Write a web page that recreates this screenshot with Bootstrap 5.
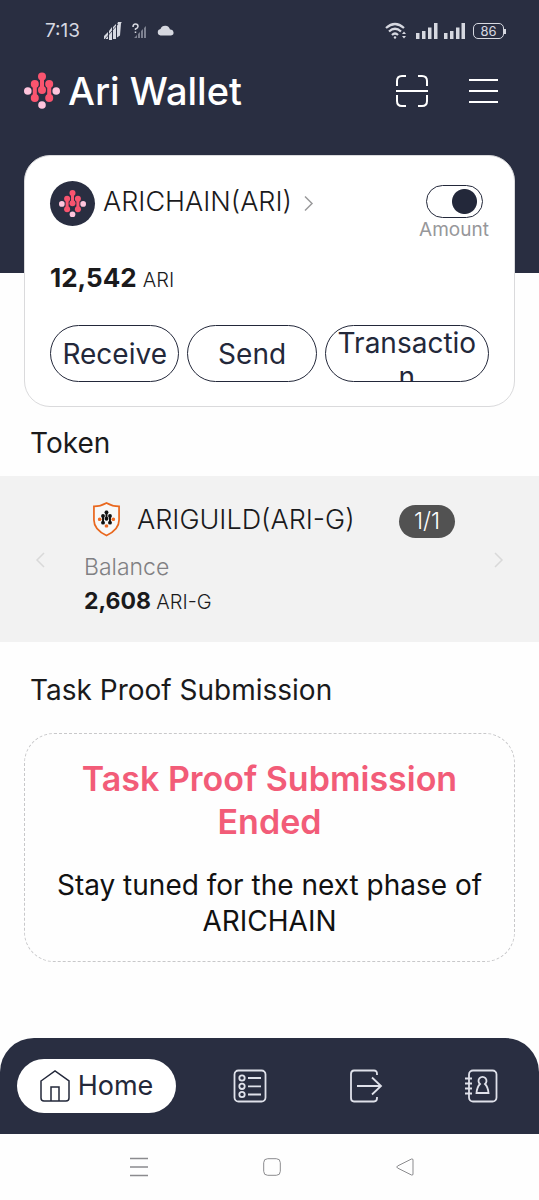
<!DOCTYPE html>
<html lang="en">
<head>
<meta charset="utf-8">
<meta name="viewport" content="width=device-width, initial-scale=1">
<title>Ari Wallet</title>
<link href="https://cdn.jsdelivr.net/npm/bootstrap@5.3.0/dist/css/bootstrap.min.css" rel="stylesheet">
<style>
  :root { --navy: #292e41; --ink: #1a1a1c; --rose: #f25c78; --pink: #ffc4dc; }
  body { font-family: Inter, "Liberation Sans", sans-serif; color: var(--ink); background: #fefefe; }
  svg { display: block; flex: none; }
  button { font-family: inherit; }
  .plain-btn { background: none; border: 0; padding: 0; color: inherit; }

  .hero { background: var(--navy); color: #fff; padding-bottom: 154px; }
  .status { height: 62px; padding: 0 33px 0 45px; color: #d6d8e0; font-size: 19px; line-height: 24px; }
  .charge { font-size: 13px; line-height: 16px; width: 31px; height: 16px; border: 1px solid #d6d8e0; border-radius: 5px; }
  .charge span { line-height: 14px; }
  .charge-tip { width: 2px; height: 5px; background: #d6d8e0; }
  .appbar { padding: 0 40px 0 24px; height: 57px; }
  .brand-name { font-size: 38px; line-height: 42px; font-weight: 500; }
  .app-actions { gap: 40px; }

  .wallet { margin: -118px 24px 0; padding: 25px 25px 24px; border: 1px solid #dadadc; border-radius: 26px; background: #fff; }
  .coin { width: 45px; height: 45px; background: var(--navy); }
  .coin-name { font-size: 27px; line-height: 36px; font-weight: 300; }
  .amount-switch { width: 70px; }
  .amount-switch .form-check-input { width: 57px; height: 33px; margin: 0; float: none; border: 1px solid #23283a; border-radius: 17px; box-shadow: none; background-color: #fff;
    background-image: radial-gradient(circle, #23283a 12px, transparent 13px); background-size: 31px 31px; background-repeat: no-repeat; background-position: left center; }
  .amount-switch .form-check-input:checked { background-position: right 2px center; }
  .amount-switch label { font-size: 19px; line-height: 24px; color: #97979a; font-weight: 400; }
  .sum { font-size: 26px; line-height: 32px; font-weight: 700; }
  .unit { font-size: 20px; font-weight: 300; }
  .acts { margin-top: 29px; }
  .act { flex: 1 1 130px; height: 57px; padding: 0 8px; font-size: 28px; line-height: 34px; color: #23283a; background: #fff; border: 1px solid #23283a; border-radius: 29px; overflow: hidden; word-break: break-all; }
  .act-wide { flex-basis: 165px; }

  .sect { font-size: 28px; line-height: 36px; font-weight: 400; margin: 0; padding: 18px 30px 15px; }
  .sect-task { padding: 30px 30px 25px; }
  .token-strip { background: #f2f2f2; padding: 25px 35px 23px; }
  .token-body { padding: 0 39px; }
  .page-pill { background: #525252; color: #fff; font-size: 23px; line-height: 33px; font-weight: 300; width: 56px; border-radius: 17px; }
  .bal-label { font-size: 23px; line-height: 33px; color: #808083; font-weight: 300; margin-top: 13px; }
  .bal { font-size: 23px; line-height: 34px; font-weight: 700; }

  .notice { margin: 0 24px; padding: 23px 20px 22px; border: 1px dashed #c8c8ca; border-radius: 30px; }
  .notice h3 { font-size: 34px; line-height: 43px; font-weight: 600; color: var(--rose); margin: 0 0 24px; }
  .notice p { font-size: 28px; line-height: 36px; font-weight: 400; color: #111; margin: 0; }

  .tabs { background: var(--navy); color: #dfe1ea; border-radius: 34px 34px 0 0; padding: 21px 0 21px 17px; gap: 16px; }
  .tab-home { width: 159px; height: 54px; border-radius: 27px; background: #fff; color: #23283a; font-size: 27px; line-height: 34px; }
  .tabs a { text-decoration: none; }
  .tab-icon { color: inherit; }
  .sysnav { height: 66px; padding: 0 67px 0 72px; color: #8b8b8e; }
</style>
</head>
<body>
<svg width="0" height="0" class="position-absolute" aria-hidden="true">
  <symbol id="ari" viewBox="0 0 36 36">
    <g fill="var(--dot, #ffc4dc)"><circle cx="3.800" cy="18.500" r="3.800"/><circle cx="32.200" cy="18.500" r="3.800"/><circle cx="18" cy="32.500" r="3.800"/></g>
    <g fill="var(--link, #f9546f)" stroke="var(--link, #f9546f)"><g stroke="none"><circle cx="18" cy="4" r="4"/><circle cx="18" cy="17.500" r="4"/><circle cx="10.800" cy="11.500" r="4"/><circle cx="10.800" cy="25.500" r="4"/><circle cx="25.200" cy="11.500" r="4"/><circle cx="25.200" cy="25.500" r="4"/></g>
    <path stroke-width="4" d="M18 4v13M10.800 11v14M25.200 11v14"/></g>
  </symbol>
</svg>
<div class="d-flex flex-column min-vh-100">
  <header class="hero">
    <div class="status d-flex align-items-center">
      <span>7:13</span>
      <svg class="ms-4" width="18" height="18" viewBox="0 0 18 18" fill="#d6d8e0"><path d="M0 14l4-4v7H0zM5 9l3-4v13H5zM9 5l3-3v15H9zM13 3l1-3 4-.5-1 2-1 12-3 2z"/><path d="M1 17L14 2" stroke="#292e41" stroke-width=".8"/></svg>
      <svg class="ms-2" width="19" height="18" viewBox="0 0 19 18"><path d="M4 16l3-3v3zM8 12l2-2v6H8zM11 9l2-2v9h-2zM14 6l2-2v12h-2z" fill="#7d8190"/><path d="M3 5Q3 2 5.500 2T8 4.500Q8 6 5.500 7V8M5.500 9.500V11" fill="none" stroke="#d6d8e0" stroke-width="1.500"/></svg>
      <svg class="ms-2" width="17" height="12" viewBox="0 0 17 12" fill="#d6d8e0"><path d="M3.500 10.500a3.300 3.300 0 0 1 0-6.500A5 5 0 0 1 13 4.500a3 3 0 0 1 1 6z"/></svg>
      <div class="d-flex align-items-center ms-auto">
        <svg width="22" height="18" viewBox="0 0 22 18" fill="none" stroke="#d6d8e0" stroke-width="2.200"><path d="M1 6Q10 -2 19 6M4 9.500Q10 4 16 9.500M7 13Q10 10 13 13"/><circle cx="10" cy="15.500" r="1.200" fill="#d6d8e0" stroke="none"/><path d="M17 12l2-2.500 2 2.500zM17 14l2 2.500 2-2.500z" fill="#d6d8e0" stroke="none"/></svg>
        <svg class="ms-2" width="23" height="16" viewBox="0 0 23 16" fill="#d6d8e0"><path d="M1 10h3.500v6H1zM7 8h3.500v8H7zM13 4.500h3.500V16H13zM19 0h3.500v16H19z"/></svg>
        <svg class="ms-1" width="23" height="16" viewBox="0 0 23 16" fill="#d6d8e0"><path d="M2 10h3.500v6H2zM8 8h3.500v8H8zM14 4.500h3.500V16H14zM19.500 0H23v16h-3.500z"/></svg>
        <div class="charge d-flex align-items-center justify-content-center ms-2"><span>86</span></div><div class="charge-tip"></div>
      </div>
    </div>
    <div class="appbar d-flex align-items-center">
      <svg width="36" height="37"><use href="#ari"/></svg>
      <span class="brand-name ms-2">Ari Wallet</span>
      <div class="app-actions d-flex align-items-center ms-auto">
        <button class="plain-btn" type="button" aria-label="Scan"><svg width="34" height="32" viewBox="0 0 34 32" fill="none" stroke="#fff" stroke-width="2"><path d="M2 11V6Q2 1 7 1H11M23 1H27Q32 1 32 6V11M2 20V26Q2 31 7 31H11M23 31H27Q32 31 32 26V20M1 16H33"/></svg></button>
        <button class="plain-btn" type="button" aria-label="Menu"><svg width="30" height="26" viewBox="0 0 30 26" stroke="#fff" stroke-width="2"><path d="M0 2H29M0 13H29M0 24H29"/></svg></button>
      </div>
    </div>
  </header>

  <main>
    <section class="wallet">
      <div class="d-flex align-items-start">
        <button class="plain-btn d-flex align-items-center" type="button">
          <span class="coin rounded-circle d-flex align-items-center justify-content-center"><svg width="27" height="27"><use href="#ari"/></svg></span>
          <span class="coin-name ps-2 pb-1">ARICHAIN(ARI)</span>
          <svg class="ms-2 ps-1" width="14" height="17" viewBox="0 0 10 17" fill="none" stroke="#9a9a9c" stroke-width="1.500"><path d="M1 1.500L8 8.500 1 15.500"/></svg>
        </button>
        <div class="amount-switch form-switch p-0 ms-auto pt-1 d-flex flex-column align-items-center">
          <input class="form-check-input" type="checkbox" role="switch" id="amount" checked>
          <label for="amount">Amount</label>
        </div>
      </div>
      <div class="sum mt-3 pt-1">12,542 <span class="unit">ARI</span></div>
      <div class="acts d-flex gap-2">
        <button class="act" type="button">Receive</button>
        <button class="act" type="button">Send</button>
        <button class="act act-wide" type="button">Transaction</button>
      </div>
    </section>

    <h2 class="sect">Token</h2>
    <section class="token-strip d-flex align-items-center">
      <button class="plain-btn" type="button" aria-label="Previous"><svg width="10" height="16" viewBox="0 0 10 16" fill="none" stroke="#d9d9d9" stroke-width="1.500"><path d="M9 1L2 8 9 15"/></svg></button>
      <div class="token-body flex-grow-1">
        <div class="d-flex align-items-center">
          <svg class="ms-2" width="29" height="37" viewBox="0 0 30 37"><path d="M15 1.500Q21 5 28 5V19Q28 29 15 35 2 29 2 19V5Q9 5 15 1.500Z" fill="#f8f8f8" stroke="#e9681f" stroke-width="1.800"/><use href="#ari" x="6" y="9" width="18" height="18" style="--dot:#ee6b24;--link:#111"/></svg>
          <span class="coin-name ms-3">ARIGUILD(ARI-G)</span>
          <span class="page-pill text-center ms-auto mt-1">1/1</span>
        </div>
        <div class="bal-label">Balance</div>
        <div class="bal">2,608 <span class="unit">ARI-G</span></div>
      </div>
      <button class="plain-btn" type="button" aria-label="Next"><svg width="10" height="16" viewBox="0 0 10 16" fill="none" stroke="#d9d9d9" stroke-width="1.500"><path d="M1 1L8 8 1 15"/></svg></button>
    </section>

    <h2 class="sect sect-task">Task Proof Submission</h2>
    <section class="notice text-center">
      <h3>Task Proof Submission Ended</h3>
      <p>Stay tuned for the next phase of ARICHAIN</p>
    </section>
  </main>

  <footer class="mt-auto pt-4">
    <nav class="tabs d-flex align-items-center">
      <a class="tab-home d-flex align-items-center justify-content-center gap-2" href="#home"><svg width="30" height="32" viewBox="0 0 30 32" fill="none" stroke="#23283a" stroke-width="1.500"><path d="M1 11L15 1 29 11V28Q29 31 26 31H4Q1 31 1 28ZM11 31V17H19V31"/></svg>Home</a>
      <div class="d-flex flex-grow-1">
        <a class="tab-icon flex-fill d-flex justify-content-center" href="#list" aria-label="List"><svg width="34" height="34" viewBox="0 0 34 34" fill="none" stroke="currentColor" stroke-width="1.800"><rect x="1.500" y="1.500" width="31" height="31" rx="4"/><circle cx="9" cy="9" r="2.700"/><circle cx="9" cy="17.300" r="2.700"/><circle cx="9" cy="25.500" r="2.700"/><path d="M15 9H28M15 17.300H28M15 25.500H28"/></svg></a>
        <a class="tab-icon flex-fill d-flex justify-content-center" href="#send" aria-label="Transfer"><svg width="34" height="34" viewBox="0 0 34 34" fill="none" stroke="currentColor" stroke-width="1.800"><path d="M28 6V5Q28 1.500 25 1.500H5Q2 1.500 2 5V29Q2 32.500 5 32.500H25Q28 32.500 28 29V28M8 17H32M23 8.500L32 17 23 25.500"/></svg></a>
        <a class="tab-icon flex-fill d-flex justify-content-center" href="#contacts" aria-label="Contacts"><svg width="34" height="34" viewBox="0 0 34 34" fill="none" stroke="currentColor" stroke-width="1.800"><rect x="5" y="1.500" width="27.500" height="31" rx="4"/><path d="M1 9.500H8M1 14.500H8M1 19.500H8M1 24.500H8M16 15A4 4 0 1 1 21 15Q24 18 24.500 24H12.500Q13 18 16 15Z"/></svg></a>
      </div>
    </nav>
    <nav class="sysnav d-flex align-items-center">
      <button class="plain-btn flex-fill d-flex justify-content-center" type="button" aria-label="Recent apps"><svg width="18" height="20" viewBox="0 0 18 20" stroke="currentColor" stroke-width="1.500"><path d="M0 1.500H18M0 10H18M0 18.500H18"/></svg></button>
      <button class="plain-btn flex-fill d-flex justify-content-center" type="button" aria-label="Home screen"><svg width="18" height="18" viewBox="0 0 18 18" fill="none" stroke="currentColor"><rect x=".7" y=".7" width="16.600" height="16.600" rx="4"/></svg></button>
      <button class="plain-btn flex-fill d-flex justify-content-center" type="button" aria-label="Back"><svg width="18" height="18" viewBox="0 0 18 18" fill="none" stroke="currentColor"><path d="M1.500 8L15.500 1Q17 .5 17 2V16Q17 17.500 15.500 17L1.500 10Q0 9 1.500 8Z"/></svg></button>
    </nav>
  </footer>
</div>
<script src="https://cdn.jsdelivr.net/npm/bootstrap@5.3.0/dist/js/bootstrap.bundle.min.js"></script>
</body>
</html>
